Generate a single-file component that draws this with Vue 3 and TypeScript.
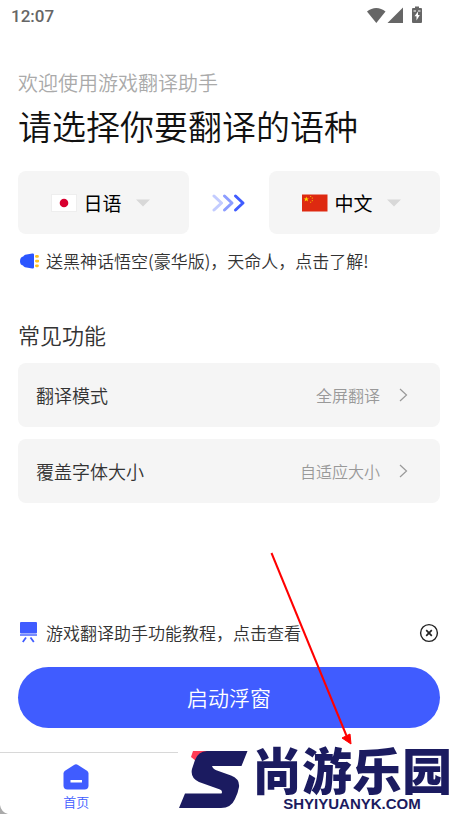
<script setup lang="ts">
import { ref } from 'vue'

interface SettingRow {
  label: string
  value: string
}

const languages: string[] = ['日语', '中文']
const source = ref<string>('日语')
const target = ref<string>('中文')
const tipVisible = ref<boolean>(true)

const settings: SettingRow[] = [
  { label: '翻译模式', value: '全屏翻译' },
  { label: '覆盖字体大小', value: '自适应大小' },
]
</script>

<template>
  <div class="screen">
    <header class="status">
      <span class="clock">12:07</span>
      <svg class="status-icons" width="58" height="20" viewBox="0 0 58 20" aria-hidden="true">
        <path d="M1 5.6C6.5 .9 14 .9 19.500 5.600L10.300 17Z" fill="#666" />
        <path d="M21.500 17H37V1.500Z" fill="#666" />
        <path d="M49 .5h4v1.500h2q1 0 1 1V16q0 1-1 1h-8q-1 0-1-1V3q0-1 1-1h2Z" fill="#666" />
        <path d="M47.500 5h2.500M52 5h2.500" stroke="#fff" stroke-width="1" />
        <path d="M52 5.500L48.500 10.300H50.500V14.500L53.800 9H52Z" fill="#fff" />
      </svg>
    </header>

    <main class="content">
      <p class="welcome">欢迎使用游戏翻译助手</p>
      <h1 class="title">请选择你要翻译的语种</h1>

      <div class="languages">
        <label class="language">
          <svg width="26" height="18" viewBox="0 0 26 18" aria-hidden="true">
            <rect x=".5" y=".5" width="25" height="17" fill="#fff" stroke="#eee" />
            <circle cx="13" cy="9" r="4.300" fill="#d80030" />
          </svg>
          <select v-model="source" class="picker" aria-label="源语言">
            <option v-for="name in languages" :key="name">{{ name }}</option>
          </select>
          <svg class="caret" width="14" height="8" viewBox="0 0 14 8" aria-hidden="true">
            <path d="M0 .5H14L7 7.500Z" fill="#d8d8d8" />
          </svg>
        </label>

        <svg class="direction" width="34" height="20" viewBox="0 0 34 20" fill="none" stroke-width="3" stroke-linecap="round" stroke-linejoin="round" aria-hidden="true">
          <path d="M2 3L9.500 10L2 17" stroke="#c3ccff" />
          <path d="M12.500 3L20 10L12.500 17" stroke="#8c9dff" />
          <path d="M23.500 3L31 10L23.500 17" stroke="#405cff" />
        </svg>

        <label class="language">
          <svg width="26" height="18" viewBox="0 0 26 18" aria-hidden="true">
            <path d="M0 .5H25.500V17.500H0Z" fill="#de2910" />
            <path d="M4.300 2.500L5 4.400H7L5.400 5.600L6 7.500L4.300 6.300L2.600 7.500L3.200 5.600L1.600 4.400H3.600Z" fill="#ffde00" />
            <path d="M8 2h1.200v1H8ZM9.800 3.600h1v1.200h-1ZM9.800 6h1v1.200h-1ZM8 7.800h1.200v1H8Z" fill="#f5a700" />
          </svg>
          <select v-model="target" class="picker" aria-label="目标语言">
            <option v-for="name in languages" :key="name">{{ name }}</option>
          </select>
          <svg class="caret" width="14" height="8" viewBox="0 0 14 8" aria-hidden="true">
            <path d="M0 .5H14L7 7.500Z" fill="#d8d8d8" />
          </svg>
        </label>
      </div>

      <a class="notice" href="#promo">
        <svg width="21" height="18" viewBox="0 0 21 18" aria-hidden="true">
          <path d="M16 2.500V15.300Q16 16.800 14.300 16.500L7 15.200Q5.600 14.800 5 13.600Q2 12.800 2 9.200Q2 5.200 5.200 4.500Q5.900 3.200 7.200 2.800L14.300 1.500Q16 1.200 16 2.500Z" fill="#2b55ff" />
          <path d="M18.400 4.400H19.500M18.400 9.100H19.900M18.400 13.800H19.500" stroke="#ffc21f" stroke-width="2.800" stroke-linecap="round" />
        </svg>
        <span>送黑神话悟空(豪华版)，天命人，点击了解!</span>
      </a>

      <h2 class="section">常见功能</h2>
      <div class="settings">
        <button v-for="row in settings" :key="row.label" class="setting" type="button">
          <span>{{ row.label }}</span>
          <span class="value">{{ row.value }}</span>
          <svg width="10" height="14" viewBox="0 0 10 14" fill="none" stroke="#999" stroke-width="1.200" aria-hidden="true">
            <path d="M2 1L8.500 7L2 13" />
          </svg>
        </button>
      </div>

      <div class="spacer"></div>

      <div v-if="tipVisible" class="tip">
        <a class="tip-link" href="#guide">
          <svg width="21" height="22" viewBox="0 0 21 22" aria-hidden="true">
            <rect x="3" y="0" width="17" height="11.500" rx="1" fill="#405cff" />
            <path d="M3 13H20" stroke="#405cff" stroke-width="1.400" />
            <path d="M9 15.500L5.800 20M13.500 15.500L16.800 20" stroke="#405cff" stroke-width="1.800" />
          </svg>
          <span>游戏翻译助手功能教程，点击查看</span>
        </a>
        <button class="close" type="button" aria-label="关闭" @click="tipVisible = false">
          <svg width="20" height="20" viewBox="0 0 20 20" fill="none" stroke="#222" aria-hidden="true">
            <circle cx="10" cy="10" r="8.400" stroke-width="1.400" />
            <path d="M7.200 7.200L12.800 12.800M12.800 7.200L7.200 12.800" stroke-width="1.700" />
          </svg>
        </button>
      </div>

      <button class="start" type="button">启动浮窗</button>
    </main>

    <nav class="tabs">
      <a class="tab" href="#home">
        <svg width="26" height="26" viewBox="0 0 26 26" aria-hidden="true">
          <path d="M11 .9Q13 -.3 15 .9L24 6.800Q25.500 7.800 25.500 9.500V21.500Q25.500 25.500 21.500 25.500H4.500Q.5 25.500 .5 21.500V9.500Q.5 7.800 2 6.800Z" fill="#405cff" />
          <rect x="7.500" y="16" width="11.500" height="2.500" fill="#fff" />
        </svg>
        <span>首页</span>
      </a>
    </nav>

    <svg class="corner" width="10" height="12" viewBox="0 0 10 12" aria-hidden="true">
      <path d="M0 3Q1 10 8 12H0Z" fill="#aaa" />
    </svg>

    <div class="brand">
      <svg class="brand-mark" width="74" height="66" viewBox="0 0 74 66" aria-hidden="true">
        <path d="M15 4H30L18 14L13 10Z" fill="#ff3d57" />
        <path d="M29 4H69.500L63.500 19H34Q35 22 39 23.500L53 28.500Q62 32 61 40Q60 46 57 52Q53 61 43 61H1L7 46.500H43.500Q45 44 42 42.500L21 35Q12 31 14 22L17 13Q20 4.500 29 4Z" fill="#1b1b60" />
      </svg>
      <div class="brand-text">
        <strong class="brand-name">尚游乐园</strong>
        <span class="brand-site">SHYIYUANYK.COM</span>
      </div>
    </div>

    <svg class="pointer" width="84" height="194" viewBox="0 0 84 194" aria-hidden="true">
      <path d="M1.500 2L77 186" stroke="#f00" stroke-width="2" />
      <path d="M72 187L76 185L80 183L81 193Z" fill="#f00" stroke="#f00" stroke-width="1" />
    </svg>
  </div>
</template>

<style>
body {
  background: #fff;
}
</style>

<style scoped>
.screen {
  position: relative;
  display: flex;
  flex-direction: column;
  min-height: 100vh;
  overflow: hidden;
  background: #fff;
  color: #333;
  font-family: "Noto Sans CJK SC", sans-serif;
  font-weight: 350;
}

h1,
h2,
p {
  margin: 0;
  font-weight: 350;
}

a {
  color: inherit;
  text-decoration: none;
}

button,
select {
  padding: 0;
  border: 0;
  background: none;
  color: inherit;
  font: inherit;
  cursor: pointer;
}

svg {
  flex: none;
}

.status {
  display: flex;
  align-items: center;
  justify-content: space-between;
  height: 32px;
  padding: 0 34px 0 11px;
}

.clock {
  color: #666;
  font: 500 17px/32px Roboto, sans-serif;
}

.content {
  display: flex;
  flex: 1;
  flex-direction: column;
  padding: 36px 18px 24px;
}

.welcome {
  color: #aaa;
  font-size: 20px;
  line-height: 30px;
}

.title {
  color: #111;
  font-size: 34px;
  line-height: 56px;
}

.languages {
  display: grid;
  grid-template-columns: 1fr 80px 1fr;
  align-items: center;
  margin-top: 17px;
}

.language {
  display: flex;
  align-items: center;
  justify-content: center;
  height: 63px;
  border-radius: 8px;
  background: #f5f5f5;
  color: #000;
  font-size: 19px;
  font-weight: 400;
  padding-right: 6px;
}

.picker {
  appearance: none;
  field-sizing: content;
  margin: 0 14px 0 6px;
}

.direction {
  justify-self: center;
}

.notice,
.tip-link {
  display: flex;
  align-items: center;
  gap: 7px;
  font-size: 17px;
  line-height: 26px;
}

.notice {
  margin-top: 14px;
}

.section {
  margin-top: 44px;
  font-size: 22px;
  line-height: 32px;
}

.settings {
  display: grid;
  gap: 12px;
  margin-top: 13px;
}

.setting {
  display: flex;
  align-items: center;
  height: 64px;
  padding: 0 32px 0 18px;
  border-radius: 8px;
  background: #f5f5f5;
  font-size: 18px;
  line-height: 24px;
}

.value {
  margin: 0 18px 0 auto;
  color: #999;
  font-size: 16px;
}

.spacer {
  flex: 1;
}

.tip {
  display: flex;
  align-items: center;
  justify-content: space-between;
  margin-bottom: 21px;
}

.tip-link {
  margin-left: -1px;
  gap: 8px;
}

.close {
  display: flex;
  margin-right: 1px;
}

.start {
  height: 61px;
  padding-bottom: 2px;
  border-radius: 31px;
  background: #405cff;
  color: #fff;
  font-size: 21px;
}

.tabs {
  display: grid;
  grid-template-columns: repeat(3, 1fr);
  height: 62px;
  box-sizing: border-box;
  border-top: 1px solid #d8d8d8;
}

.tab {
  display: flex;
  flex-direction: column;
  align-items: center;
  padding-top: 11px;
  color: #405cff;
  font-size: 13px;
  line-height: 24px;
}

.corner {
  position: absolute;
  bottom: 0;
  left: 0;
}

.brand {
  position: absolute;
  right: 0;
  bottom: 0;
  display: flex;
  width: 280px;
  height: 70px;
  background: #fff;
  color: #1b1b60;
}

.brand-mark {
  margin-top: 3px;
}

.brand-text {
  display: flex;
  flex-direction: column;
  align-items: center;
}

.brand-name {
  margin-top: -2px;
  font-size: 50px;
  font-weight: 900;
  line-height: 52px;
}

.brand-site {
  margin-top: 2px;
  font: 700 15px/16px "Liberation Sans", sans-serif;
}

.pointer {
  position: absolute;
  right: 104px;
  bottom: 69px;
}
</style>
